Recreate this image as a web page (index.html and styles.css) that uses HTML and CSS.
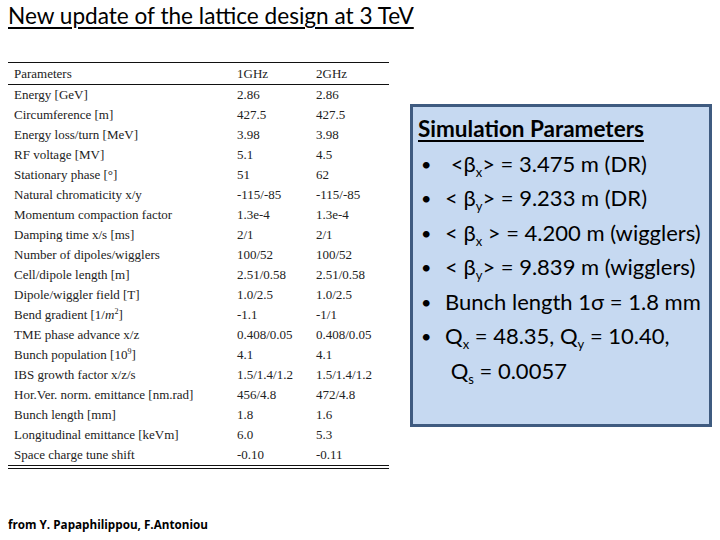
FILE: index.html
```html
<!DOCTYPE html>
<html>
<head>
<meta charset="utf-8">
<link rel="stylesheet" href="styles.css">
</head>
<body>
<div class="page">
  <h1 class="title">New update of the lattice design at 3 TeV</h1>
  <div class="main">
    <div class="table">
      <div class="row head"><span>Parameters</span><span>1GHz</span><span>2GHz</span></div>
      <div class="row"><span>Energy [GeV]</span><span>2.86</span><span>2.86</span></div>
      <div class="row"><span>Circumference [m]</span><span>427.5</span><span>427.5</span></div>
      <div class="row"><span>Energy loss/turn [MeV]</span><span>3.98</span><span>3.98</span></div>
      <div class="row"><span>RF voltage [MV]</span><span>5.1</span><span>4.5</span></div>
      <div class="row"><span>Stationary phase [°]</span><span>51</span><span>62</span></div>
      <div class="row"><span>Natural chromaticity x/y</span><span>-115/-85</span><span>-115/-85</span></div>
      <div class="row"><span>Momentum compaction factor</span><span>1.3e-4</span><span>1.3e-4</span></div>
      <div class="row"><span>Damping time x/s [ms]</span><span>2/1</span><span>2/1</span></div>
      <div class="row"><span>Number of dipoles/wigglers</span><span>100/52</span><span>100/52</span></div>
      <div class="row"><span>Cell/dipole length [m]</span><span>2.51/0.58</span><span>2.51/0.58</span></div>
      <div class="row"><span>Dipole/wiggler field [T]</span><span>1.0/2.5</span><span>1.0/2.5</span></div>
      <div class="row"><span>Bend gradient [1/<i>m</i><sup>2</sup>]</span><span>-1.1</span><span>-1/1</span></div>
      <div class="row"><span>TME phase advance x/z</span><span>0.408/0.05</span><span>0.408/0.05</span></div>
      <div class="row"><span>Bunch population [10<sup>9</sup>]</span><span>4.1</span><span>4.1</span></div>
      <div class="row"><span>IBS growth factor x/z/s</span><span>1.5/1.4/1.2</span><span>1.5/1.4/1.2</span></div>
      <div class="row"><span>Hor.Ver. norm. emittance [nm.rad]</span><span>456/4.8</span><span>472/4.8</span></div>
      <div class="row"><span>Bunch length [mm]</span><span>1.8</span><span>1.6</span></div>
      <div class="row"><span>Longitudinal emittance [keVm]</span><span>6.0</span><span>5.3</span></div>
      <div class="row"><span>Space charge tune shift</span><span>-0.10</span><span>-0.11</span></div>
    </div>
    <div class="box">
      <div class="box-title">Simulation Parameters</div>
      <ul class="list">
        <li>&nbsp;&lt;β<sub>x</sub>&gt; = 3.475 m (DR)</li>
        <li>&lt; β<sub>y</sub>&gt; = 9.233 m (DR)</li>
        <li>&lt; β<sub>x</sub> &gt; = 4.200 m (wigglers)</li>
        <li>&lt; β<sub>y</sub>&gt; = 9.839 m (wigglers)</li>
        <li>Bunch length 1σ = 1.8 mm</li>
        <li>Q<sub>x</sub> = 48.35, Q<sub>y</sub> = 10.40,<br>&nbsp;Q<sub>s</sub> = 0.0057</li>
      </ul>
    </div>
  </div>
  <div class="foot">from Y. Papaphilippou, F.Antoniou</div>
</div>
</body>
</html>
```
FILE: styles.css
```css
html, body { margin: 0; padding: 0; background: #fff; }
.page { width: 720px; height: 540px; padding: 0 8px; box-sizing: border-box; position: relative; }
.title {
  margin: 0;
  padding-top: 4px;
  font-family: Lato, "Open Sans", sans-serif;
  font-weight: normal;
  font-size: 22.6px;
  line-height: 24px;
  color: #000;
  text-decoration: underline;
  text-decoration-thickness: 2px;
  text-underline-offset: 3px;
  display: inline-block;
}
.main { display: flex; align-items: flex-start; margin-top: 34px; }
.table {
  width: 381px;
  font-family: "Liberation Serif", serif;
  font-size: 13px;
  color: #222;
  border-top: 1px solid #111;
  border-bottom: 4px double #111;
}
.row { display: grid; grid-template-columns: 229px 79px 73px; height: 20px; line-height: 20px; }
.row span:first-child { padding-left: 6px; }
.row.head { height: 21px; line-height: 22px; border-bottom: 1px solid #111; }
.row sup { font-size: 8px; line-height: 0; vertical-align: 5px; }
.row i { font-style: italic; }
.box {
  margin-left: 21px;
  margin-top: 42px;
  width: 303px;
  height: 323px;
  box-sizing: border-box;
  background: #c6d9f1;
  border: 3px solid #3f5b80;
  padding: 5px 0 0 5px;
  font-family: Lato, "Open Sans", sans-serif;
  font-size: 22px;
  line-height: 34.5px;
  color: #000;
}
.box-title { font-weight: bold; font-size: 22.5px; text-decoration: underline; text-decoration-thickness: 2px; text-underline-offset: 3px; }
.list { list-style: none; margin: 0; padding: 0; }
.list li { position: relative; padding-left: 27px; white-space: nowrap; }
.list li::before { content: "•"; position: absolute; left: 3px; top: 0; font-size: 18px; }
.list sub { font-size: 13px; line-height: 0; vertical-align: -5px; }
.foot {
  position: absolute;
  left: 8px;
  top: 516px;
  font-family: "Open Sans", sans-serif;
  font-weight: bold;
  font-size: 11.7px;
  color: #000;
}
```
